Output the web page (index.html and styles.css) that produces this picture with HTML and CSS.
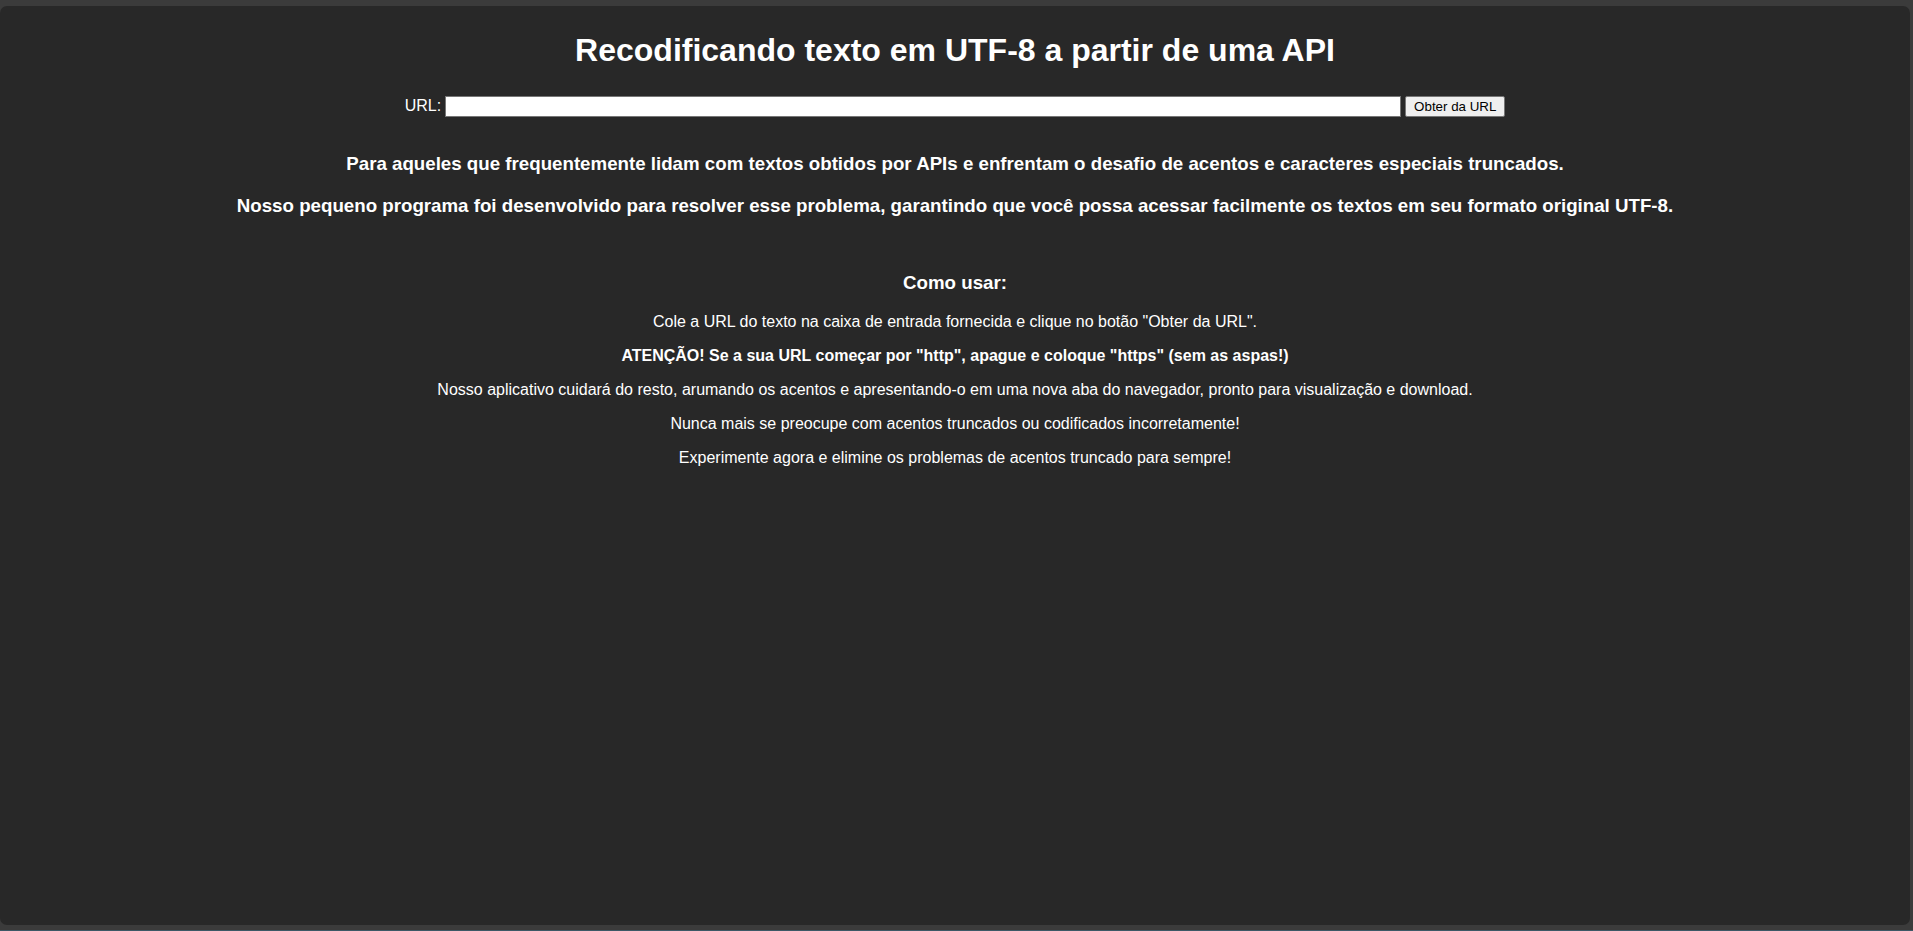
FILE: index.html
```html
<!DOCTYPE html>
<html lang="pt-BR">
<head>
<meta charset="utf-8">
<title>Recodificando texto em UTF-8</title>
<link rel="stylesheet" href="styles.css">
</head>
<body>
<div class="frame">
  <h1 class="title">Recodificando texto em UTF-8 a partir de uma API</h1>
  <form class="url-form">
    <label class="url-label" for="url">URL:</label>
    <input class="url-input" id="url" type="text">
    <button class="url-button" type="button">Obter da URL</button>
  </form>
  <h3 class="lead lead-first">Para aqueles que frequentemente lidam com textos obtidos por APIs e enfrentam o desafio de acentos e caracteres especiais truncados.</h3>
  <h3 class="lead">Nosso pequeno programa foi desenvolvido para resolver esse problema, garantindo que você possa acessar facilmente os textos em seu formato original UTF-8.</h3>
  <h3 class="howto">Como usar:</h3>
  <p class="step">Cole a URL do texto na caixa de entrada fornecida e clique no botão "Obter da URL".</p>
  <p class="step step-bold">ATENÇÃO! Se a sua URL começar por "http", apague e coloque "https" (sem as aspas!)</p>
  <p class="step">Nosso aplicativo cuidará do resto, arumando os acentos e apresentando-o em uma nova aba do navegador, pronto para visualização e download.</p>
  <p class="step">Nunca mais se preocupe com acentos truncados ou codificados incorretamente!</p>
  <p class="step">Experimente agora e elimine os problemas de acentos truncado para sempre!</p>
</div>
</body>
</html>
```
FILE: styles.css
```css
html, body {
  margin: 0;
  padding: 0;
  height: 100%;
}
body {
  background: #3b3b3b;
  font-family: "Liberation Sans", Arial, sans-serif;
  color: #ffffff;
  overflow: hidden;
  border-bottom: 1px solid #3d5866;
  box-sizing: border-box;
}
.frame {
  box-sizing: border-box;
  margin: 6px 3px 0 0;
  height: 919px;
  background: #282828;
  border-radius: 7px;
  padding-top: 26px;
  text-align: center;
}
.title {
  margin: 0 0 26px;
  font-size: 32px;
  line-height: 37px;
  font-weight: bold;
}
.url-form {
  display: flex;
  justify-content: center;
  align-items: center;
  height: 22px;
  font-size: 16px;
}
.url-label {
  margin-right: 4px;
}
.url-input {
  box-sizing: border-box;
  width: 956px;
  height: 21px;
  margin: 0 4px 0 0;
  padding: 1px 2px;
  border: 1px solid #767676;
  background: #ffffff;
  font-size: 13.33px;
}
.url-button {
  box-sizing: border-box;
  height: 21px;
  margin: 0;
  padding: 1px 8px;
  border: 1px solid #767676;
  border-radius: 2px;
  background: #efefef;
  color: #000000;
  font-family: "Liberation Sans", Arial, sans-serif;
  font-size: 13.33px;
}
.lead {
  margin: 20px 0 0;
  font-size: 18.72px;
  line-height: 22px;
  font-weight: bold;
}
.lead-first {
  margin-top: 36px;
}
.howto {
  margin: 55px 0 19px;
  font-size: 18.72px;
  line-height: 22px;
  font-weight: bold;
}
.step {
  margin: 0 0 16px;
  font-size: 16px;
  line-height: 18px;
}
.step-bold {
  font-weight: bold;
}
```
